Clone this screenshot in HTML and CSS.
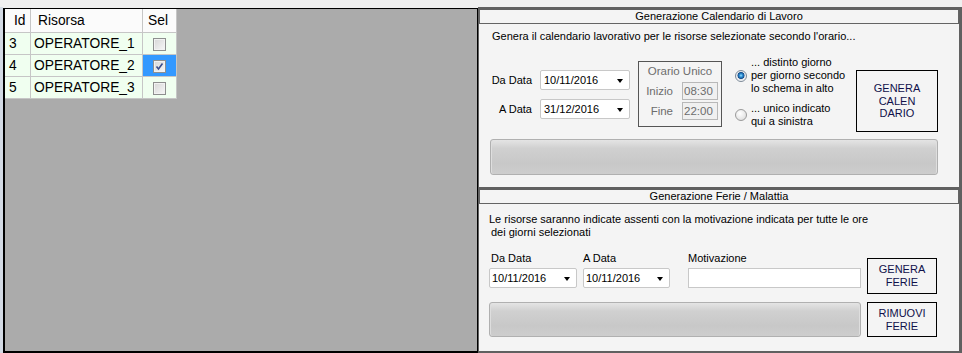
FILE: index.html
```html
<!DOCTYPE html>
<html lang="it">
<head>
    <meta charset="UTF-8">
    <meta name="viewport" content="width=device-width, initial-scale=1.0">
    <title>Calendario Risorse</title>
    <link rel="stylesheet" href="styles.css">
</head>
<body>
    <div class="app">
        <div class="grid-pane">
            <div class="risorse">
                <div class="cell head">Id</div>
                <div class="cell head head-nome">Risorsa</div>
                <div class="cell head head-sel">Sel</div>

                <div class="cell num">3</div>
                <div class="cell">OPERATORE_1</div>
                <div class="cell sel"><span class="chk"></span></div>

                <div class="cell num">4</div>
                <div class="cell">OPERATORE_2</div>
                <div class="cell sel selected">
                    <span class="chk">
                        <svg width="11" height="11" viewBox="0 0 11 11"><path d="M2.5 5.5 L4.5 8 L8.5 2.5" fill="none" stroke="#3b4d8c" stroke-width="1.6"/></svg>
                    </span>
                </div>

                <div class="cell num">5</div>
                <div class="cell">OPERATORE_3</div>
                <div class="cell sel"><span class="chk"></span></div>
            </div>
        </div>

        <div class="side">
            <section class="box box-cal">
                <div class="box-title">Generazione Calendario di Lavoro</div>
                <div class="box-body">
                    <p class="intro">Genera il calendario lavorativo per le risorse selezionate secondo l'orario...</p>
                    <div class="cal-row">
                        <div class="dates">
                            <div class="field">
                                <label>Da Data</label>
                                <div class="combo">10/11/2016<i class="arrow"></i></div>
                            </div>
                            <div class="field">
                                <label>A Data</label>
                                <div class="combo">31/12/2016<i class="arrow"></i></div>
                            </div>
                        </div>
                        <div class="orario">
                            <div class="orario-title">Orario Unico</div>
                            <div class="orario-grid">
                                <span class="lbl-off">Inizio</span>
                                <span class="tb-off">08:30</span>
                                <span class="lbl-off">Fine</span>
                                <span class="tb-off">22:00</span>
                            </div>
                        </div>
                        <div class="radios">
                            <div class="radio">
                                <span class="dot on"></span>
                                <span>... distinto giorno<br>per giorno secondo<br>lo schema in alto</span>
                            </div>
                            <div class="radio">
                                <span class="dot"></span>
                                <span>... unico indicato<br>qui a sinistra</span>
                            </div>
                        </div>
                        <button class="btn btn-cal">GENERA<br>CALEN<br>DARIO</button>
                    </div>
                    <div class="progress progress-cal"></div>
                </div>
            </section>

            <section class="box box-ferie">
                <div class="box-title">Generazione Ferie / Malattia</div>
                <div class="box-body ferie-body">
                    <div class="ferie-main">
                        <p class="note">Le risorse saranno indicate assenti con la motivazione indicata per tutte le ore<br><span class="indent">dei giorni selezionati</span></p>
                        <div class="ferie-fields">
                            <div class="ff ff-da">
                                <label>Da Data</label>
                                <div class="combo">10/11/2016<i class="arrow"></i></div>
                            </div>
                            <div class="ff ff-a">
                                <label>A Data</label>
                                <div class="combo">10/11/2016<i class="arrow"></i></div>
                            </div>
                            <div class="ff ff-mot">
                                <label>Motivazione</label>
                                <div class="textbox"></div>
                            </div>
                        </div>
                        <div class="progress progress-ferie"></div>
                    </div>
                    <div class="ferie-buttons">
                        <button class="btn btn-ferie">GENERA<br>FERIE</button>
                        <button class="btn btn-rimuovi">RIMUOVI<br>FERIE</button>
                    </div>
                </div>
            </section>
        </div>
    </div>
</body>
</html>
```

FILE: styles.css
```css
/* window */
body {
    margin: 0;
    background-color: #f0f0f0;
    font-family: 'Liberation Sans', Arial, sans-serif;
    font-size: 11px;
    color: #000;
}

.app {
    display: flex;
    height: 346px;
    margin-top: 7px;
    border-left: 3px solid #d3dae4;
}

/* left grid */
.grid-pane {
    box-sizing: border-box;
    width: 475px;
    height: 345px;
    margin-top: 1px;
    background-color: #ababab;
    border: 1px solid #000;
    border-left-width: 2px;
    border-bottom-width: 2px;
}

.risorse {
    display: grid;
    grid-template-columns: 26px 112px 34px;
    grid-template-rows: 24px 22px 22px 22px;
    width: 172px;
    font-size: 13.8px;
}

.cell {
    box-sizing: border-box;
    display: flex;
    align-items: center;
    padding-left: 3px;
    background-color: #f0fff0;
    border-right: 1px solid #c6c6c6;
    border-bottom: 1px solid #c6c6c6;
    white-space: nowrap;
}

.cell.num {
    padding-left: 4px;
}

.cell.head {
    background-color: #fbfbfb;
    padding-left: 9px;
}

.cell.head-nome {
    padding-left: 7px;
}

.cell.head-sel {
    padding-left: 5px;
}

.cell.sel {
    justify-content: center;
    padding: 1px 0 0;
}

.cell.selected {
    background-color: #3399ff;
}

.chk {
    box-sizing: border-box;
    display: flex;
    align-items: center;
    justify-content: center;
    width: 13px;
    height: 13px;
    border: 1px solid #8e8f8f;
    background: linear-gradient(135deg, #d6d6d6, #f7f7f7);
    box-shadow: inset 0 0 0 1px #f2f2f2;
}

/* right side */
.side {
    box-sizing: border-box;
    display: flex;
    flex-direction: column;
    gap: 3px;
    width: 484px;
    height: 346px;
    padding: 3px 3px 2px 1px;
    background-color: #606060;
}

.box {
    display: flex;
    flex-direction: column;
    background-color: #f4f4f4;
}

.box-cal {
    height: 177px;
}

.box-ferie {
    flex-grow: 1;
}

.box-title {
    height: 13px;
    line-height: 13px;
    text-align: center;
    border: 1px solid #646464;
    border-top: none;
}

.box-body {
    padding: 6px 21px 0 11px;
    line-height: 13px;
}

.intro {
    margin: 0 0 0 2px;
}

.cal-row {
    display: flex;
    align-items: flex-start;
    margin-top: 13px;
}

.dates {
    display: flex;
    flex-direction: column;
    gap: 9px;
    margin-top: 14px;
}

.field {
    display: flex;
    align-items: center;
}

.field label {
    width: 42px;
    margin-right: 8px;
    text-align: right;
}

.combo {
    box-sizing: border-box;
    display: flex;
    align-items: center;
    justify-content: space-between;
    width: 90px;
    height: 20px;
    padding: 0 6px 0 3px;
    background-color: #fff;
    border: 1px solid #c8c8c8;
    border-radius: 2px;
}

.arrow {
    width: 0;
    height: 0;
    margin-top: 2px;
    border-left: 3.5px solid transparent;
    border-right: 3.5px solid transparent;
    border-top: 4px solid #000;
}

.orario {
    box-sizing: border-box;
    width: 84px;
    height: 66px;
    margin: 5px 0 0 8px;
    padding: 3px 0 0 2px;
    border: 1px solid #555;
    color: #6d6d6d;
}

.orario-title {
    text-align: center;
    font-size: 11.5px;
    padding-right: 2px;
}

.orario-grid {
    display: grid;
    grid-template-columns: 32px 36px;
    column-gap: 9px;
    row-gap: 2px;
    align-items: center;
    margin-top: 4px;
    font-size: 11.5px;
}

.lbl-off {
    text-align: right;
}

.tb-off {
    box-sizing: border-box;
    height: 18px;
    line-height: 16px;
    padding-left: 1px;
    background-color: #f0f0f0;
    border: 1px solid #b8b8b8;
}

.radios {
    display: flex;
    flex-direction: column;
    gap: 7px;
    margin-left: 13px;
}

.radio {
    display: flex;
    align-items: center;
    gap: 4px;
    white-space: nowrap;
}

.dot {
    box-sizing: border-box;
    width: 12px;
    height: 12px;
    border-radius: 50%;
    border: 1px solid #9a9a9a;
    background: radial-gradient(circle at 40% 35%, #fff, #d8d8d8);
}

.dot.on {
    border-color: #7d8a98;
    background: radial-gradient(circle at 50% 45%, #9fe0ff 0, #2f93d8 1.5px, #174e8c 3.2px, #dfe3e8 3.8px, #fff 6px);
}

.btn {
    box-sizing: border-box;
    padding: 0;
    font-family: inherit;
    font-size: 11px;
    line-height: 13px;
    color: #10104a;
    background-color: #f4f4f4;
    border: 1px solid #000;
    text-align: center;
}

.btn-cal {
    width: 82px;
    height: 62px;
    margin: 14px 0 0 auto;
    line-height: 12.5px;
}

.progress {
    box-sizing: border-box;
    background: linear-gradient(#e4e4e4, #d0d0d0 25%, #c8c8c8 70%, #cdcdcd);
    border: 1px solid #b0b0b0;
    border-radius: 3px;
    box-shadow: inset 1px 0 0 #dedede, inset -1px 0 0 #dedede;
}

.progress-cal {
    height: 36px;
    margin-top: 7px;
}

/* ferie */
.ferie-body {
    display: flex;
    padding: 9px 0 0 10px;
}

.ferie-main {
    width: 372px;
}

.note {
    margin: 0;
    white-space: nowrap;
}

.indent {
    padding-left: 2px;
}

.ferie-fields {
    display: flex;
    margin-top: 13px;
}

.ff label {
    display: block;
    margin-bottom: 3px;
}

.ff-da {
    width: 88px;
}

.ff-da label {
    padding-left: 2px;
}

.ff-da .combo,
.ff-a .combo {
    width: 100%;
    padding-left: 2px;
}

.ff-a {
    width: 87px;
    margin-left: 6px;
}

.ff-mot {
    width: 173px;
    margin-left: 18px;
}

.textbox {
    box-sizing: border-box;
    height: 20px;
    background-color: #fff;
    border: 1px solid #c8c8c8;
}

.progress-ferie {
    height: 35px;
    margin-top: 14px;
}

.ferie-buttons {
    display: flex;
    flex-direction: column;
    gap: 8px;
    margin: 45px 0 0 6px;
}

.btn-ferie {
    width: 70px;
    height: 36px;
}

.btn-rimuovi {
    width: 70px;
    height: 35px;
}
```
